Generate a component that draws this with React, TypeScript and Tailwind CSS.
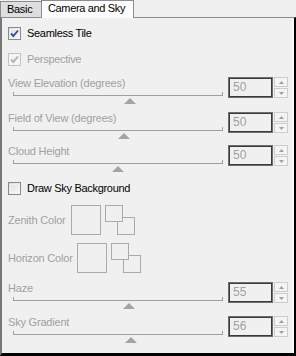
import React from "react";

const font = { fontFamily: '"Liberation Sans", Arial, sans-serif' };

// --- little win7 style bits ---
const CheckBox = ({ checked = false, disabled = false }) => (
  <span
    className={`relative inline-block h-[13px] w-[13px] shrink-0 border ${
      disabled ? "border-[#c4c4c4] bg-[#f4f4f4]" : "border-[#8a8a8a] bg-gradient-to-br from-[#dcdcdc] to-[#fbfbfb]"
    }`}
  >
    <span className={`absolute inset-[1px] border ${disabled ? "border-[#f8f8f8]" : "border-[#f2f2f2]"}`} />
    {checked && (
      <svg className="absolute left-0 top-0" width="11" height="11" viewBox="0 0 11 11">
        <polyline
          points="2,5.5 4.3,8 9,2.5"
          fill="none"
          stroke={disabled ? "#b0b0b8" : "#3b4f8f"}
          strokeWidth="1.9"
        />
      </svg>
    )}
  </span>
);

const CheckRow = ({ label, checked, disabled, className = "" }: { label: string; checked?: boolean; disabled?: boolean; className?: string }) => (
  <div className={`flex h-[13px] items-center pl-[6px] ${className}`}>
    <CheckBox checked={checked} disabled={disabled} />
    <span className={`ml-[6px] text-[11px] leading-[13px] tracking-[-0.3px] ${disabled ? "text-[#a0a0a0]" : "text-black"}`}>
      {label}
    </span>
  </div>
);

const SpinBox = ({ value }: { value: number }) => (
  <div className="flex">
    <div className="h-[21px] w-[45px] border border-[#6e6e6e] bg-[#f0f0f0] shadow-[inset_1px_1px_0_#3a3a3a,inset_-1px_-1px_0_#3a3a3a] pl-[4px] text-[12px] leading-[19px] text-[#a0a0a0]">
      {value}
    </div>
    <div className="ml-[1px] flex h-[21px] w-[14px] flex-col gap-px">
      <div className="flex h-[10px] items-center justify-center border border-[#cdcdcd] bg-[#f4f4f4]">
        <svg width="5" height="3" viewBox="0 0 5 3"><polygon points="0,3 2.5,0 5,3" fill="#a0a0a0" /></svg>
      </div>
      <div className="flex h-[10px] items-center justify-center border border-[#cdcdcd] bg-[#f4f4f4]">
        <svg width="5" height="3" viewBox="0 0 5 3"><polygon points="0,0 2.5,3 5,0" fill="#a0a0a0" /></svg>
      </div>
    </div>
  </div>
);

const SliderGroup = ({ label, value, pos, className = "" }: { label: string; value: number; pos: number; className?: string }) => (
  <div className={`flex pl-[6px] ${className}`}>
    <div className="w-[220px]">
      <div className="h-[13px] text-[11px] leading-[13px] tracking-[-0.2px] text-[#a0a0a0]">{label}</div>
      <div className="relative ml-[5px] h-[15px] w-[210px]">
        {/* channel with end ticks */}
        <div className="absolute left-0 right-0 top-[5px] h-px bg-[#a0a0a0]" />
        <div className="absolute left-0 top-[2px] h-[3px] w-px bg-[#a0a0a0]" />
        <div className="absolute right-0 top-[2px] h-[3px] w-px bg-[#a0a0a0]" />
        <svg
          className="absolute top-[8px]"
          style={{ left: `${pos * 210 - 6}px` }}
          width="12"
          height="6"
          viewBox="0 0 12 6"
        >
          <polygon points="0,6 6,0 12,6" fill="#a4a4a4" />
        </svg>
      </div>
    </div>
    <SpinBox value={value} />
  </div>
);

const Swatches = () => (
  <div className="flex items-start gap-[4px]">
    <div className="h-[30px] w-[30px] border border-[#ababab]" />
    <div className="relative h-[30px] w-[30px]">
      <div className="absolute left-[12px] top-[12px] h-[18px] w-[18px] border border-[#ababab]" />
      <div className="absolute left-0 top-0 h-[17px] w-[18px] border border-[#ababab] bg-[#f0f0f0]" />
    </div>
  </div>
);

const ColorRow = ({ label, labelWidth, className = "" }: { label: string; labelWidth: string; className?: string }) => (
  <div className={`flex items-center pl-[6px] ${className}`}>
    <span className={`${labelWidth} text-[11px] leading-[13px] tracking-[-0.2px] text-[#a0a0a0]`}>{label}</span>
    <Swatches />
  </div>
);

export default function App() {
  return (
    <div className="flex h-[356px] w-[296px] flex-col bg-[#f0f0f0]" style={font}>
      {/* tab strip */}
      <div className="relative z-10 flex h-[17px] items-end">
        <div className="h-[16px] w-[42px] border border-b-0 border-[#898c95] bg-[#dedede] pl-[6px] pt-[1px] text-[11px] leading-[13px] tracking-[-0.3px] text-black">
          Basic
        </div>
        <div className="-mb-px -ml-px h-[18px] w-[93px] border border-b-0 border-[#898c95] bg-[#fcfcfc] pl-[6px] pt-[1px] text-[11px] leading-[13px] tracking-[-0.35px] text-black">
          Camera and Sky
        </div>
      </div>

      {/* panel */}
      <div className="flex-1 border-b-[3px] border-l-2 border-r-2 border-t border-b-black border-l-[#777] border-r-black border-t-[#898c95] shadow-[inset_-2px_0_0_#fafafa]">
        <CheckRow label="Seamless Tile" checked className="mt-[9px]" />
        <CheckRow label="Perspective" checked disabled className="mt-[13px]" />

        <SliderGroup label="View Elevation (degrees)" value={50} pos={50 / 90} className="mt-[11px]" />
        <SliderGroup label="Field of View (degrees)" value={50} pos={0.53} className="mt-[7px]" />
        <SliderGroup label="Cloud Height" value={50} pos={0.5} className="mt-[5px]" />

        <CheckRow label="Draw Sky Background" className="mt-[9px]" />

        <ColorRow label="Zenith Color" labelWidth="w-[63px]" className="mt-[10px]" />
        <ColorRow label="Horizon Color" labelWidth="w-[69px]" className="mt-[8px]" />

        <SliderGroup label="Haze" value={55} pos={0.55} className="mt-[9px]" />
        <SliderGroup label="Sky Gradient" value={56} pos={0.56} className="mt-[6px]" />
      </div>
    </div>
  );
}
